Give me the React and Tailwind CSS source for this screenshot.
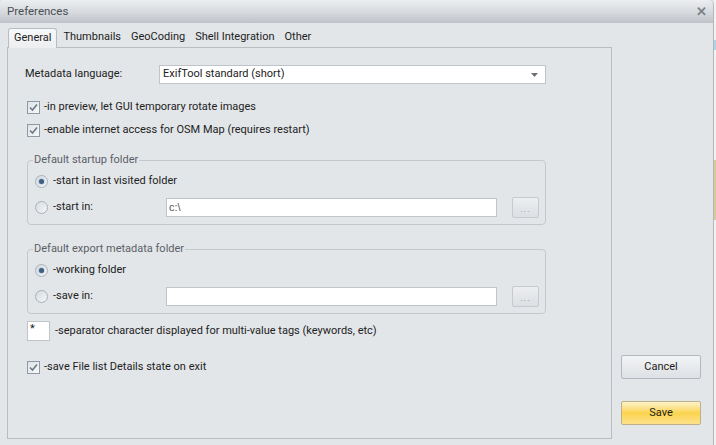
const font = { fontFamily: 'Roboto, "Open Sans", sans-serif' }

function CheckBox() {
  return (
    <span className="flex h-[13px] w-[13px] shrink-0 items-center justify-center border border-[#8e9aa6] bg-gradient-to-br from-[#dfe3e7] to-[#f7f8f9]">
      <svg width="9" height="9" viewBox="0 0 9 9">
        <path d="M1 4.5 L3.5 7 L8 1.5" fill="none" stroke="#6e7a86" strokeWidth="1.6" />
      </svg>
    </span>
  )
}

function Radio({ on }) {
  return (
    <span className="flex h-[13px] w-[13px] shrink-0 items-center justify-center rounded-full border border-[#a7b0b9] bg-gradient-to-br from-[#d6dbe0] to-[#f6f7f8]">
      {on && <span className="h-[5px] w-[5px] rounded-full bg-[#3d5f82] shadow-[0_0_2px_#6f93b8]" />}
    </span>
  )
}

function DotsButton() {
  return (
    <div className="flex h-[21px] w-[27px] items-end justify-center rounded-[2px] border border-[#c6cacf] bg-gradient-to-b from-[#eceef0] to-[#dcdfe3] pb-[3px] text-[9px] leading-none tracking-[1px] text-[#8a8f95]">
      ...
    </div>
  )
}

function Group({ title, first, second, value }) {
  return (
    <fieldset className="mt-[14px] w-[519px] rounded-[4px] border border-[#c4c8cc] pb-[6px]">
      <legend className="ml-[5px] px-[1px] leading-[14px] text-[#5b6068]">{title}</legend>
      <div className="mt-[5px] flex h-[18px] items-center pl-[7px]">
        <Radio on />
        <span className="ml-[5px]">{first}</span>
      </div>
      <div className="mt-[6px] flex h-[22px] items-center pl-[7px]">
        <Radio />
        <span className="ml-[5px] w-[113px]">{second}</span>
        <div className="flex h-[19px] w-[331px] items-center border border-[#bfc4c9] bg-white pl-[2px] text-[11px] text-[#555]" style={{ fontFamily: '"Liberation Sans", sans-serif' }}>
          {value}
        </div>
        <div className="ml-[15px]">
          <DotsButton />
        </div>
      </div>
    </fieldset>
  )
}

export default function App() {
  const tabs = ['General', 'Thumbnails', 'GeoCoding', 'Shell Integration', 'Other']
  return (
    <div className="flex h-[445px] w-[716px] overflow-hidden bg-[#e3e6e9] text-[11px] text-[#222]" style={font}>
      <div className="flex w-[714px] flex-col rounded-t-[5px] border-r border-[#b4b8bd]">
        {/* Title bar */}
        <div className="flex h-[23px] items-center justify-between rounded-t-[5px] bg-gradient-to-b from-[#eceef0] via-[#d8dbdf] to-[#bfc3c9] pl-[7px] pr-[6px]">
          <span className="text-[11.5px] text-[#4a4f56]">Preferences</span>
          <span className="text-[13px] font-bold leading-none text-[#7d838a]">✕</span>
        </div>

        <div className="flex flex-1">
          {/* Left: tabs and page */}
          <div className="ml-[7px] flex w-[605px] flex-col">
            <div className="mt-[4px] flex h-[20px] items-end">
              {tabs.map((t, i) => (
                <div
                  key={t}
                  className={
                    i === 0
                      ? 'relative top-[1px] ml-[1px] mr-[1px] flex h-[20px] items-center rounded-t-[3px] border border-b-0 border-[#b9bdc2] bg-gradient-to-b from-[#f7f8f9] to-[#eceef0] px-[5px]'
                      : 'flex h-[19px] items-center px-[5px]'
                  }
                >
                  {t}
                </div>
              ))}
            </div>
            <div className="flex h-[392px] flex-col border border-[#b9bdc2] pl-[19px]">
              <div className="mt-[17px] flex h-[19px] items-center">
                <span className="ml-[-2px] w-[134px]">Metadata language:</span>
                <div className="flex h-[19px] w-[387px] items-center justify-between border border-[#bfc4c9] bg-white pl-[3px] pr-[7px]">
                  <span>ExifTool standard (short)</span>
                  <svg width="7" height="4" viewBox="0 0 7 4"><path d="M0 0 H7 L3.5 4 Z" fill="#6b7077" /></svg>
                </div>
              </div>
              <div className="mt-[14px] flex h-[18px] items-center">
                <CheckBox />
                <span className="ml-[4px]">-in preview, let GUI temporary rotate images</span>
              </div>
              <div className="mt-[5px] flex h-[18px] items-center">
                <CheckBox />
                <span className="ml-[4px]">-enable internet access for OSM Map (requires restart)</span>
              </div>

              <Group title="Default startup folder" first="-start in last visited folder" second="-start in:" value="c:\" />
              <div className="mt-[3px]" />
              <Group title="Default export metadata folder" first="-working folder" second="-save in:" value="" />

              <div className="mt-[7px] flex h-[20px] items-center">
                <div className="flex h-[20px] w-[23px] items-start border border-[#bfc4c9] bg-white pl-[2px] pt-[1px] text-[11px] leading-[12px]">*</div>
                <span className="ml-[5px]">-separator character displayed for multi-value tags (keywords, etc)</span>
              </div>
              <div className="mt-[17px] flex h-[18px] items-center">
                <CheckBox />
                <span className="ml-[4px]">-save File list Details state on exit</span>
              </div>
            </div>
          </div>

          {/* Right: buttons */}
          <div className="ml-[9px] flex flex-col pt-[332px]">
            <button className="h-[24px] w-[80px] rounded-[2px] border border-[#b3b8be] bg-gradient-to-b from-[#f3f4f6] to-[#dde0e4] text-[11px] text-[#1e1e1e]">
              Cancel
            </button>
            <button className="mt-[22px] h-[24px] w-[80px] rounded-[2px] border border-[#c0b089] bg-gradient-to-b from-[#fdf3c8] via-[#fbd34a] to-[#fde28a] text-[11px] text-[#1e1e1e]">
              Save
            </button>
          </div>
        </div>
      </div>
      <div className="flex w-[2px] flex-col bg-[#f2f2f2]">
        <div className="mt-[40px] h-[10px] bg-[#a9d3e8]" />
        <div className="mt-[110px] h-[60px] bg-[#d9c89a]" />
      </div>
    </div>
  )
}
